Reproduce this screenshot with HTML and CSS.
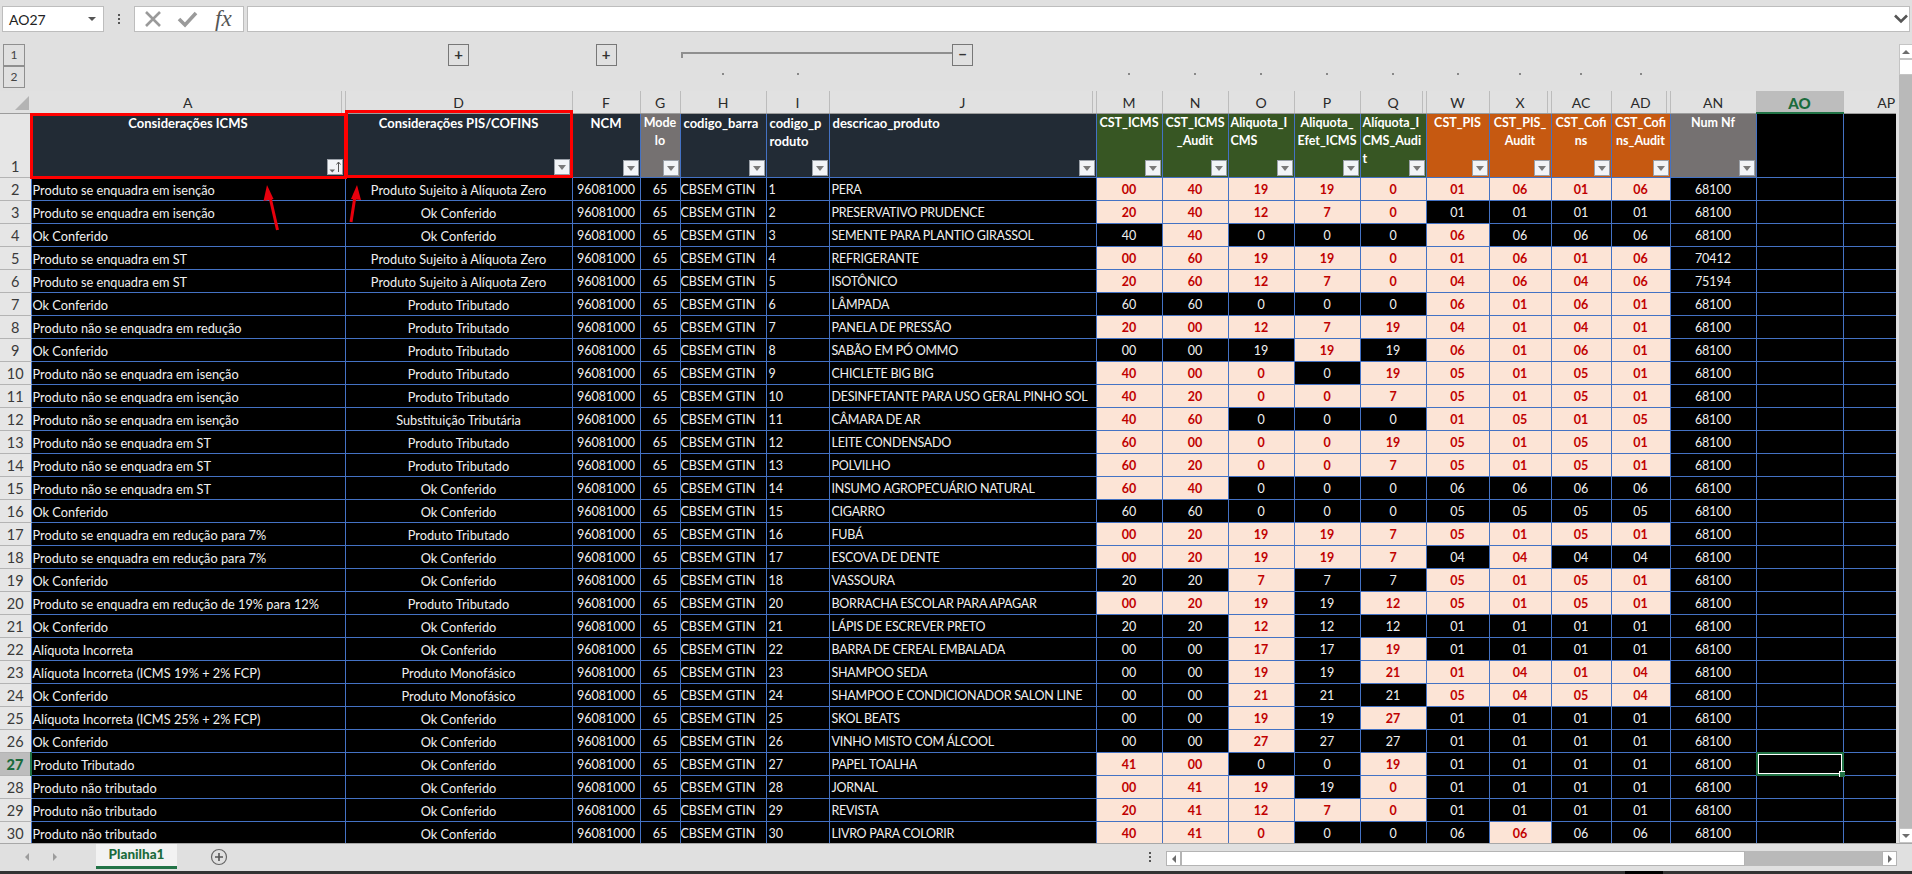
FILE: index.html
```html
<!DOCTYPE html>
<html lang="pt-BR">
<head>
<meta charset="utf-8">
<title>Planilha1</title>
<link rel="stylesheet" href="styles.css">
</head>
<body>
<div class="fbar">
  <div class="namebox"><span>AO27</span><i class="namearrow"></i></div>
  <div class="vdots"><b></b><b></b><b></b></div>
  <div class="fbtns">
    <svg class="ico" width="20" height="20" viewBox="0 0 20 20"><path d="M3 3L17 17M17 3L3 17" stroke="#9a9a9a" stroke-width="2.6" fill="none"/></svg>
    <svg class="ico" width="22" height="20" viewBox="0 0 22 20"><path d="M3 10L9 16L20 4" stroke="#9a9a9a" stroke-width="3.6" fill="none"/></svg>
    <span class="fx">fx</span>
  </div>
  <div class="finput"><svg width="14" height="10" viewBox="0 0 14 10"><path d="M1 1.5L7 7.5L13 1.5" stroke="#555" stroke-width="2.6" fill="none"/></svg></div>
</div>
<div class="work">
  <div class="left">
    <div class="outline">
      <div class="lvl lvl1">1</div>
      <div class="lvl lvl2">2</div>
      <div class="obtn od">+</div>
      <div class="obtn of">+</div>
      <div class="slider"></div>
      <div class="obtn oj">&minus;</div>
      <i class="dot d6"></i><i class="dot d7"></i><i class="dot d9"></i><i class="dot d10"></i><i class="dot d11"></i><i class="dot d12"></i><i class="dot d13"></i><i class="dot d14"></i><i class="dot d15"></i><i class="dot d16"></i><i class="dot d17"></i>
    </div>
    <div class="sheet">
      <table class="grid">
        <colgroup>
          <col class="w31"><col class="w314"><col class="w227"><col class="w68"><col class="w40"><col class="w86"><col class="w63"><col class="w267"><col class="w66"><col class="w66"><col class="w66"><col class="w66"><col class="w66"><col class="w63"><col class="w62"><col class="w60"><col class="w59"><col class="w86"><col class="w87"><col class="w53">
        </colgroup>
        <thead>
          <tr class="letters">
            <th class="corner"><svg width="16" height="16" viewBox="0 0 16 16"><path d="M15 1V15H1Z" fill="#b4b4b4"/></svg></th>
            <th class="hid">A</th><th>D</th><th>F</th><th>G</th><th>H</th><th>I</th><th class="hid">J</th><th>M</th><th>N</th><th>O</th><th>P</th><th class="hid">Q</th><th>W</th><th class="hid">X</th><th>AC</th><th class="hid">AD</th><th>AN</th><th class="cursel">AO</th><th class="noline">AP</th>
          </tr>
          <tr class="heads">
            <th class="rn rn1">1</th>
            <th class="hd"><div class="hc">Considerações ICMS<span class="flt sort"><svg width="14" height="14" viewBox="0 0 14 14"><path d="M1.500 9.500H7L4.250 12.500Z" fill="#666"/><path d="M10.500 12V2M8.500 4.500L10.500 2L12.500 4.500" stroke="#555" stroke-width="1" fill="none"/></svg></span></div></th>
            <th class="hd"><div class="hc">Considerações PIS/COFINS<span class="flt"></span></div></th>
            <th class="hd"><div class="hc">NCM<span class="flt"></span></div></th>
            <th class="hn"><div class="hc">Mode<br>lo<span class="flt"></span></div></th>
            <th class="hd lft"><div class="hc">codigo_barra<span class="flt"></span></div></th>
            <th class="hd lft"><div class="hc">codigo_p<br>roduto<span class="flt"></span></div></th>
            <th class="hd lft"><div class="hc">descricao_produto<span class="flt"></span></div></th>
            <th class="hg"><div class="hc">CST_ICMS<span class="flt"></span></div></th>
            <th class="hg"><div class="hc">CST_ICMS<br>_Audit<span class="flt"></span></div></th>
            <th class="hg lft"><div class="hc">Aliquota_I<br>CMS<span class="flt"></span></div></th>
            <th class="hg"><div class="hc">Aliquota_<br>Efet_ICMS<span class="flt"></span></div></th>
            <th class="hg lft"><div class="hc">Alíquota_I<br>CMS_Audi<br>t<span class="flt"></span></div></th>
            <th class="ho"><div class="hc">CST_PIS<span class="flt"></span></div></th>
            <th class="ho"><div class="hc">CST_PIS_<br>Audit<span class="flt"></span></div></th>
            <th class="ho"><div class="hc">CST_Cofi<br>ns<span class="flt"></span></div></th>
            <th class="ho"><div class="hc">CST_Cofi<br>ns_Audit<span class="flt"></span></div></th>
            <th class="hn"><div class="hc">Num Nf<span class="flt"></span></div></th>
            <th class="hk"></th><th class="hk"></th>
          </tr>
        </thead>
        <tbody>
<tr><th class="rn">2</th><td class="l">Produto se enquadra em isenção</td><td>Produto Sujeito à Alíquota Zero</td><td>96081000</td><td>65</td><td class="l">CBSEM GTIN</td><td class="l">1</td><td class="l">PERA</td><td class="p">00</td><td class="p">40</td><td class="p">19</td><td class="p">19</td><td class="p">0</td><td class="p">01</td><td class="p">06</td><td class="p">01</td><td class="p">06</td><td>68100</td><td></td><td></td></tr>
<tr><th class="rn">3</th><td class="l">Produto se enquadra em isenção</td><td>Ok Conferido</td><td>96081000</td><td>65</td><td class="l">CBSEM GTIN</td><td class="l">2</td><td class="l">PRESERVATIVO PRUDENCE</td><td class="p">20</td><td class="p">40</td><td class="p">12</td><td class="p">7</td><td class="p">0</td><td>01</td><td>01</td><td>01</td><td>01</td><td>68100</td><td></td><td></td></tr>
<tr><th class="rn">4</th><td class="l">Ok Conferido</td><td>Ok Conferido</td><td>96081000</td><td>65</td><td class="l">CBSEM GTIN</td><td class="l">3</td><td class="l">SEMENTE PARA PLANTIO GIRASSOL</td><td>40</td><td class="p">40</td><td>0</td><td>0</td><td>0</td><td class="p">06</td><td>06</td><td>06</td><td>06</td><td>68100</td><td></td><td></td></tr>
<tr><th class="rn">5</th><td class="l">Produto se enquadra em ST</td><td>Produto Sujeito à Alíquota Zero</td><td>96081000</td><td>65</td><td class="l">CBSEM GTIN</td><td class="l">4</td><td class="l">REFRIGERANTE</td><td class="p">00</td><td class="p">60</td><td class="p">19</td><td class="p">19</td><td class="p">0</td><td class="p">01</td><td class="p">06</td><td class="p">01</td><td class="p">06</td><td>70412</td><td></td><td></td></tr>
<tr><th class="rn">6</th><td class="l">Produto se enquadra em ST</td><td>Produto Sujeito à Alíquota Zero</td><td>96081000</td><td>65</td><td class="l">CBSEM GTIN</td><td class="l">5</td><td class="l">ISOTÔNICO</td><td class="p">20</td><td class="p">60</td><td class="p">12</td><td class="p">7</td><td class="p">0</td><td class="p">04</td><td class="p">06</td><td class="p">04</td><td class="p">06</td><td>75194</td><td></td><td></td></tr>
<tr><th class="rn">7</th><td class="l">Ok Conferido</td><td>Produto Tributado</td><td>96081000</td><td>65</td><td class="l">CBSEM GTIN</td><td class="l">6</td><td class="l">LÂMPADA</td><td>60</td><td>60</td><td>0</td><td>0</td><td>0</td><td class="p">06</td><td class="p">01</td><td class="p">06</td><td class="p">01</td><td>68100</td><td></td><td></td></tr>
<tr><th class="rn">8</th><td class="l">Produto não se enquadra em redução</td><td>Produto Tributado</td><td>96081000</td><td>65</td><td class="l">CBSEM GTIN</td><td class="l">7</td><td class="l">PANELA DE PRESSÃO</td><td class="p">20</td><td class="p">00</td><td class="p">12</td><td class="p">7</td><td class="p">19</td><td class="p">04</td><td class="p">01</td><td class="p">04</td><td class="p">01</td><td>68100</td><td></td><td></td></tr>
<tr><th class="rn">9</th><td class="l">Ok Conferido</td><td>Produto Tributado</td><td>96081000</td><td>65</td><td class="l">CBSEM GTIN</td><td class="l">8</td><td class="l">SABÃO EM PÓ OMMO</td><td>00</td><td>00</td><td>19</td><td class="p">19</td><td>19</td><td class="p">06</td><td class="p">01</td><td class="p">06</td><td class="p">01</td><td>68100</td><td></td><td></td></tr>
<tr><th class="rn">10</th><td class="l">Produto não se enquadra em isenção</td><td>Produto Tributado</td><td>96081000</td><td>65</td><td class="l">CBSEM GTIN</td><td class="l">9</td><td class="l">CHICLETE BIG BIG</td><td class="p">40</td><td class="p">00</td><td class="p">0</td><td>0</td><td class="p">19</td><td class="p">05</td><td class="p">01</td><td class="p">05</td><td class="p">01</td><td>68100</td><td></td><td></td></tr>
<tr><th class="rn">11</th><td class="l">Produto não se enquadra em isenção</td><td>Produto Tributado</td><td>96081000</td><td>65</td><td class="l">CBSEM GTIN</td><td class="l">10</td><td class="l">DESINFETANTE PARA USO GERAL PINHO SOL</td><td class="p">40</td><td class="p">20</td><td class="p">0</td><td class="p">0</td><td class="p">7</td><td class="p">05</td><td class="p">01</td><td class="p">05</td><td class="p">01</td><td>68100</td><td></td><td></td></tr>
<tr><th class="rn">12</th><td class="l">Produto não se enquadra em isenção</td><td>Substituição Tributária</td><td>96081000</td><td>65</td><td class="l">CBSEM GTIN</td><td class="l">11</td><td class="l">CÂMARA DE AR</td><td class="p">40</td><td class="p">60</td><td>0</td><td>0</td><td>0</td><td class="p">01</td><td class="p">05</td><td class="p">01</td><td class="p">05</td><td>68100</td><td></td><td></td></tr>
<tr><th class="rn">13</th><td class="l">Produto não se enquadra em ST</td><td>Produto Tributado</td><td>96081000</td><td>65</td><td class="l">CBSEM GTIN</td><td class="l">12</td><td class="l">LEITE CONDENSADO</td><td class="p">60</td><td class="p">00</td><td class="p">0</td><td class="p">0</td><td class="p">19</td><td class="p">05</td><td class="p">01</td><td class="p">05</td><td class="p">01</td><td>68100</td><td></td><td></td></tr>
<tr><th class="rn">14</th><td class="l">Produto não se enquadra em ST</td><td>Produto Tributado</td><td>96081000</td><td>65</td><td class="l">CBSEM GTIN</td><td class="l">13</td><td class="l">POLVILHO</td><td class="p">60</td><td class="p">20</td><td class="p">0</td><td class="p">0</td><td class="p">7</td><td class="p">05</td><td class="p">01</td><td class="p">05</td><td class="p">01</td><td>68100</td><td></td><td></td></tr>
<tr><th class="rn">15</th><td class="l">Produto não se enquadra em ST</td><td>Ok Conferido</td><td>96081000</td><td>65</td><td class="l">CBSEM GTIN</td><td class="l">14</td><td class="l">INSUMO AGROPECUÁRIO NATURAL</td><td class="p">60</td><td class="p">40</td><td>0</td><td>0</td><td>0</td><td>06</td><td>06</td><td>06</td><td>06</td><td>68100</td><td></td><td></td></tr>
<tr><th class="rn">16</th><td class="l">Ok Conferido</td><td>Ok Conferido</td><td>96081000</td><td>65</td><td class="l">CBSEM GTIN</td><td class="l">15</td><td class="l">CIGARRO</td><td>60</td><td>60</td><td>0</td><td>0</td><td>0</td><td>05</td><td>05</td><td>05</td><td>05</td><td>68100</td><td></td><td></td></tr>
<tr><th class="rn">17</th><td class="l">Produto se enquadra em redução para 7%</td><td>Produto Tributado</td><td>96081000</td><td>65</td><td class="l">CBSEM GTIN</td><td class="l">16</td><td class="l">FUBÁ</td><td class="p">00</td><td class="p">20</td><td class="p">19</td><td class="p">19</td><td class="p">7</td><td class="p">05</td><td class="p">01</td><td class="p">05</td><td class="p">01</td><td>68100</td><td></td><td></td></tr>
<tr><th class="rn">18</th><td class="l">Produto se enquadra em redução para 7%</td><td>Ok Conferido</td><td>96081000</td><td>65</td><td class="l">CBSEM GTIN</td><td class="l">17</td><td class="l">ESCOVA DE DENTE</td><td class="p">00</td><td class="p">20</td><td class="p">19</td><td class="p">19</td><td class="p">7</td><td>04</td><td class="p">04</td><td>04</td><td>04</td><td>68100</td><td></td><td></td></tr>
<tr><th class="rn">19</th><td class="l">Ok Conferido</td><td>Ok Conferido</td><td>96081000</td><td>65</td><td class="l">CBSEM GTIN</td><td class="l">18</td><td class="l">VASSOURA</td><td>20</td><td>20</td><td class="p">7</td><td>7</td><td>7</td><td class="p">05</td><td class="p">01</td><td class="p">05</td><td class="p">01</td><td>68100</td><td></td><td></td></tr>
<tr><th class="rn">20</th><td class="l">Produto se enquadra em redução de 19% para 12%</td><td>Produto Tributado</td><td>96081000</td><td>65</td><td class="l">CBSEM GTIN</td><td class="l">20</td><td class="l">BORRACHA ESCOLAR PARA APAGAR</td><td class="p">00</td><td class="p">20</td><td class="p">19</td><td>19</td><td class="p">12</td><td class="p">05</td><td class="p">01</td><td class="p">05</td><td class="p">01</td><td>68100</td><td></td><td></td></tr>
<tr><th class="rn">21</th><td class="l">Ok Conferido</td><td>Ok Conferido</td><td>96081000</td><td>65</td><td class="l">CBSEM GTIN</td><td class="l">21</td><td class="l">LÁPIS DE ESCREVER PRETO</td><td>20</td><td>20</td><td class="p">12</td><td>12</td><td>12</td><td>01</td><td>01</td><td>01</td><td>01</td><td>68100</td><td></td><td></td></tr>
<tr><th class="rn">22</th><td class="l">Alíquota Incorreta</td><td>Ok Conferido</td><td>96081000</td><td>65</td><td class="l">CBSEM GTIN</td><td class="l">22</td><td class="l">BARRA DE CEREAL EMBALADA</td><td>00</td><td>00</td><td class="p">17</td><td>17</td><td class="p">19</td><td>01</td><td>01</td><td>01</td><td>01</td><td>68100</td><td></td><td></td></tr>
<tr><th class="rn">23</th><td class="l">Alíquota Incorreta (ICMS 19% + 2% FCP)</td><td>Produto Monofásico</td><td>96081000</td><td>65</td><td class="l">CBSEM GTIN</td><td class="l">23</td><td class="l">SHAMPOO SEDA</td><td>00</td><td>00</td><td class="p">19</td><td>19</td><td class="p">21</td><td class="p">01</td><td class="p">04</td><td class="p">01</td><td class="p">04</td><td>68100</td><td></td><td></td></tr>
<tr><th class="rn">24</th><td class="l">Ok Conferido</td><td>Produto Monofásico</td><td>96081000</td><td>65</td><td class="l">CBSEM GTIN</td><td class="l">24</td><td class="l">SHAMPOO E CONDICIONADOR SALON LINE</td><td>00</td><td>00</td><td class="p">21</td><td>21</td><td>21</td><td class="p">05</td><td class="p">04</td><td class="p">05</td><td class="p">04</td><td>68100</td><td></td><td></td></tr>
<tr><th class="rn">25</th><td class="l">Alíquota Incorreta (ICMS 25% + 2% FCP)</td><td>Ok Conferido</td><td>96081000</td><td>65</td><td class="l">CBSEM GTIN</td><td class="l">25</td><td class="l">SKOL BEATS</td><td>00</td><td>00</td><td class="p">19</td><td>19</td><td class="p">27</td><td>01</td><td>01</td><td>01</td><td>01</td><td>68100</td><td></td><td></td></tr>
<tr><th class="rn">26</th><td class="l">Ok Conferido</td><td>Ok Conferido</td><td>96081000</td><td>65</td><td class="l">CBSEM GTIN</td><td class="l">26</td><td class="l">VINHO MISTO COM ÁLCOOL</td><td>00</td><td>00</td><td class="p">27</td><td>27</td><td>27</td><td>01</td><td>01</td><td>01</td><td>01</td><td>68100</td><td></td><td></td></tr>
<tr><th class="rn cur">27</th><td class="l">Produto Tributado</td><td>Ok Conferido</td><td>96081000</td><td>65</td><td class="l">CBSEM GTIN</td><td class="l">27</td><td class="l">PAPEL TOALHA</td><td class="p">41</td><td class="p">00</td><td>0</td><td>0</td><td class="p">19</td><td>01</td><td>01</td><td>01</td><td>01</td><td>68100</td><td class="selcell"><div class="selbox"><i class="handle"></i></div></td><td></td></tr>
<tr><th class="rn">28</th><td class="l">Produto não tributado</td><td>Ok Conferido</td><td>96081000</td><td>65</td><td class="l">CBSEM GTIN</td><td class="l">28</td><td class="l">JORNAL</td><td class="p">00</td><td class="p">41</td><td class="p">19</td><td>19</td><td class="p">0</td><td>01</td><td>01</td><td>01</td><td>01</td><td>68100</td><td></td><td></td></tr>
<tr><th class="rn">29</th><td class="l">Produto não tributado</td><td>Ok Conferido</td><td>96081000</td><td>65</td><td class="l">CBSEM GTIN</td><td class="l">29</td><td class="l">REVISTA</td><td class="p">20</td><td class="p">41</td><td class="p">12</td><td class="p">7</td><td class="p">0</td><td>01</td><td>01</td><td>01</td><td>01</td><td>68100</td><td></td><td></td></tr>
<tr><th class="rn">30</th><td class="l">Produto não tributado</td><td>Ok Conferido</td><td>96081000</td><td>65</td><td class="l">CBSEM GTIN</td><td class="l">30</td><td class="l">LIVRO PARA COLORIR</td><td class="p">40</td><td class="p">41</td><td class="p">0</td><td>0</td><td>0</td><td>06</td><td class="p">06</td><td>06</td><td>06</td><td>68100</td><td></td><td></td></tr>
        </tbody>
      </table>
      <div class="redbox rb-a"></div>
      <div class="redbox rb-d"></div>
      <svg class="arrows" width="400" height="150" viewBox="0 0 400 150"><path d="M277.500 139L269.500 104" stroke="#e8000d" stroke-width="3" fill="none"/><path d="M267 94L273.500 108L263.500 110Z" fill="#e8000d"/><path d="M351 131L355.500 102" stroke="#e8000d" stroke-width="3" fill="none"/><path d="M357 94L361 109L351 108Z" fill="#e8000d"/></svg>
    </div>
  </div>
  <div class="vscroll">
    <div class="vbtn"><i class="tri up"></i></div>
    <div class="vthumb"></div>
    <div class="vtrack"></div>
    <div class="vbtn"><i class="tri down"></i></div>
  </div>
</div>
<div class="tabbar">
  <i class="nav navl"></i>
  <i class="nav navr"></i>
  <div class="tab">Planilha1</div>
  <svg class="addsheet" width="18" height="18" viewBox="0 0 18 18"><circle cx="9" cy="9" r="7.500" stroke="#666" stroke-width="1.200" fill="none"/><path d="M5 9H13M9 5V13" stroke="#555" stroke-width="1.600"/></svg>
  <div class="hdots"><b></b><b></b><b></b></div>
  <div class="hbtn"><i class="htri hl"></i></div>
  <div class="hthumb"></div>
  <div class="htrack"></div>
  <div class="hbtn"><i class="htri hr"></i></div>
</div>
<div class="taskbar"><i class="taskblack"></i></div>
</body>
</html>
```
FILE: styles.css
```css
* { box-sizing: border-box; }
html, body { margin: 0; padding: 0; }
body {
  width: 1912px; height: 874px; overflow: hidden;
  background: #e0e0e0;
  font-family: Lato, "Open Sans", sans-serif;
  display: flex; flex-direction: column;
}
/* formula bar */
.fbar { height: 32px; padding: 6px 2px 0 2px; display: flex; align-items: stretch; flex: none; }
.namebox { width: 102px; height: 26px; background: #fff; border: 1px solid #bdbdbd; display: flex; align-items: center; justify-content: space-between; padding: 0 6px 0 6px; font-size: 14px; color: #222; }
.namearrow { width: 0; height: 0; border-left: 4px solid transparent; border-right: 4px solid transparent; border-top: 4px solid #555; margin-right: 1px; }
.vdots { width: 30px; display: flex; flex-direction: column; align-items: center; justify-content: center; gap: 2px; height: 26px; }
.vdots b, .hdots b { display: block; width: 2px; height: 2px; background: #555; }
.fbtns { width: 110px; height: 26px; background: #fff; border: 1px solid #bdbdbd; display: flex; align-items: center; padding-left: 8px; gap: 13px; }
.ico { flex: none; }
.fx { font-family: "Liberation Serif", serif; font-style: italic; font-size: 23px; color: #555; margin-left: 4px; }
.finput { margin-left: 3px; flex: 1; height: 26px; background: #fff; border: 1px solid #bdbdbd; display: flex; align-items: center; justify-content: flex-end; padding-right: 1px; }
/* work */
.work { height: 811px; display: flex; flex: none; }
.left { width: 1896px; flex: none; }
.outline {
  height: 59px;
  display: grid;
  grid-template-columns: 31px 314px 227px 68px 40px 86px 63px 267px 66px 66px 66px 66px 66px 63px 62px 60px 59px 86px 87px 53px;
  grid-template-rows: 12px 22px 22px 3px;
}
.lvl { grid-column: 1; width: 22px; height: 22px; margin-left: 3px; border: 1px solid #8f8f8f; font-size: 12px; color: #444; text-align: center; line-height: 20px; }
.lvl1 { grid-row: 2; }
.lvl2 { grid-row: 3; }
.obtn { grid-row: 2; justify-self: center; width: 21px; height: 22px; border: 1px solid #777; color: #333; font-size: 15px; font-weight: 700; text-align: center; line-height: 19px; }
.od { grid-column: 3; }
.of { grid-column: 4; }
.oj { grid-column: 8; }
.slider { grid-row: 2; grid-column: 6 / span 3; margin: 8px 144px 0 1px; height: 6px; border-top: 2px solid #8f8f8f; border-left: 2px solid #8f8f8f; }
.dot { grid-row: 3; justify-self: center; width: 2px; height: 2px; background: #888; margin-top: 7px; }
.d6 { grid-column: 6; } .d7 { grid-column: 7; } .d9 { grid-column: 9; } .d10 { grid-column: 10; } .d11 { grid-column: 11; } .d12 { grid-column: 12; } .d13 { grid-column: 13; } .d14 { grid-column: 14; } .d15 { grid-column: 15; } .d16 { grid-column: 16; } .d17 { grid-column: 17; }
/* sheet */
.sheet { position: relative; height: 752px; overflow: hidden; }
.grid { width: 1896px; table-layout: fixed; border-collapse: collapse; font-size: 12.5px; }
.w31{width:31px}.w314{width:314px}.w227{width:227px}.w68{width:68px}.w40{width:40px}.w86{width:86px}.w63{width:63px}.w267{width:267px}.w66{width:66px}.w62{width:62px}.w60{width:60px}.w59{width:59px}.w87{width:87px}.w53{width:53px}
.letters th { height: 22px; padding: 2px 0 0; background: #e1e1e1; color: #2a2a2a; font-weight: 400; font-size: 14px; border-right: 1px solid #bcbcbc; border-bottom: 1px solid #9c9c9c; overflow: hidden; }
.letters .hid { box-shadow: inset -3px 0 0 #e1e1e1, inset -4px 0 0 #bcbcbc; }
.letters .corner { text-align: right; padding: 2px 1px 0 0; vertical-align: middle; border-right: 0; }
.corner svg { display: block; margin-left: auto; }
.letters .cursel { background: #bdbdbd; color: #1a6b3c; font-weight: 900; font-size: 15px; border-bottom: 2px solid #217346; }
.letters .noline { border-right: 0; padding-left: 33px; }
.heads th { height: 64px; color: #fff; font-weight: 700; font-size: 12.5px; line-height: 18px; vertical-align: top; padding: 0; border: 1px solid #4472c4; }
.heads .hd { font-size: 13px; }
.hc { position: relative; height: 63px; white-space: nowrap; text-align: center; }
.lft .hc { text-align: left; padding-left: 2px; }
.hd.lft .hc { padding-left: 3px; }
.hd { background: #222b35; }
.hn { background: #757171; }
.hg { background: #375623; }
.ho { background: #c65911; }
.hk { background: #000; }
.flt { position: absolute; right: 1px; bottom: 1px; width: 16px; height: 16px; background: #f2f4f7; border: 1px solid #9aa0a8; }
.flt::after { content: ""; position: absolute; left: 3px; top: 5px; border-left: 4px solid transparent; border-right: 4px solid transparent; border-top: 5px solid #7a7a7a; }
.hd:nth-child(2) .flt, .hd:nth-child(3) .flt { right: 2px; bottom: 2px; }
.sort::after { display: none; }
.sort svg { display: block; position: absolute; left: 0; top: 0; }
.rn { background: #e6e6e6; color: #3a3a3a; font-weight: 400; font-size: 14.5px; text-align: center; padding: 1px 0 0; border-bottom: 1px solid #b4b4b4; border-right: 1px solid #4472c4; }
.heads .rn1 { color: #3a3a3a; font-weight: 400; font-size: 14.5px; vertical-align: bottom; line-height: 20px; border: 0; border-bottom: 1px solid #b4b4b4; background: #e6e6e6; }
.rn.cur { background: #bdbdbd; color: #1a6b3c; font-weight: 900; border-right: 2px solid #217346; }
tbody td { height: 23px; padding: 3px 0 0; background: #000; color: #f0f0f0; text-align: center; border: 1px solid #4472c4; white-space: nowrap; overflow: hidden; line-height: 18px; }
tbody td:nth-child(2), tbody td:nth-child(3) { font-size: 12.75px; }
tbody td:nth-child(8) { font-size: 12.5px; letter-spacing: -0.25px; }
tbody td.l { text-align: left; padding-left: 2px; }
tbody td:nth-child(2).l { padding-left: 1px; }
tbody td:nth-child(6).l { padding-left: 0; }
tbody td.p { background: #fce4d6; color: #c00000; font-weight: 700; }
.selcell { position: relative; overflow: visible; }
.selbox { position: absolute; left: -1px; top: -1px; right: -1px; bottom: -1px; border: 2px solid #217346; box-shadow: inset 0 0 0 1px #fff; }
.handle { position: absolute; right: -3px; bottom: -3px; width: 6px; height: 6px; background: #217346; border: 1px solid #fff; border-width: 1px 0 0 1px; }
.redbox { position: absolute; border: 3px solid #f00; }
.rb-a { left: 30px; top: 22px; width: 317px; height: 66px; }
.rb-d { left: 345px; top: 19px; width: 228px; height: 68px; }
.arrows { position: absolute; left: 0; top: 0; }
/* vscroll */
.vscroll { margin: 12px 0 0 3px; width: 13px; display: flex; flex-direction: column; flex: 1; }
.vbtn { height: 15px; background: #fff; border: 1px solid #c4c4c4; border-right: 0; flex: none; display: flex; align-items: center; justify-content: center; }
.vthumb { height: 16px; background: #fff; border: 1px solid #c4c4c4; border-right: 0; flex: none; }
.vtrack { flex: 1; background: #b9b9b9; }
.tri { width: 0; height: 0; border-left: 4px solid transparent; border-right: 4px solid transparent; }
.tri.up { border-bottom: 4px solid #6d6d6d; }
.tri.down { border-top: 4px solid #6d6d6d; }
/* tab bar */
.tabbar { height: 28px; flex: none; border-top: 1px solid #a8a8a8; position: relative; display: flex; align-items: flex-start; }
.nav { width: 0; height: 0; border-top: 4px solid transparent; border-bottom: 4px solid transparent; margin-top: 9px; }
.navl { margin-left: 25px; border-right: 4px solid #9c9c9c; }
.navr { margin-left: 24px; border-left: 4px solid #9c9c9c; }
.tab { margin-left: 39px; width: 81px; height: 25px; background: #f2f2f2; border-bottom: 3px solid #217346; color: #1a6b3c; font-weight: 900; font-size: 13.5px; text-align: center; line-height: 21px; }
.addsheet { margin: 4px 0 0 33px; flex: none; }
.hdots { margin: 8px 0 0 921px; width: 2px; height: 10px; display: flex; flex-direction: column; justify-content: space-between; flex: none; }
.hbtn { margin-top: 7px; width: 15px; height: 15px; background: #fff; border: 1px solid #b4b4b4; flex: none; display: flex; align-items: center; justify-content: center; }
.hdots + .hbtn { margin-left: 15px; }
.htri { width: 0; height: 0; border-top: 4px solid transparent; border-bottom: 4px solid transparent; }
.hl { border-right: 4px solid #6d6d6d; }
.hr { border-left: 4px solid #6d6d6d; }
.hthumb { margin-top: 7px; width: 564px; height: 15px; background: #fff; border: 1px solid #b4b4b4; flex: none; }
.htrack { margin-top: 7px; width: 137px; height: 15px; background: #b9b9b9; flex: none; }
/* taskbar */
.taskbar { height: 3px; flex: none; background: #333; display: flex; padding-left: 1625px; }
.taskblack { width: 38px; height: 3px; background: #000; }
```
